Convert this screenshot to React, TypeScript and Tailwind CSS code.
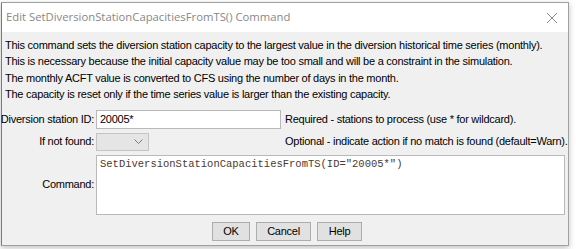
import React from "react";

const sans = { fontFamily: "'Liberation Sans', Arial, sans-serif" };

const notes = [
  "This command sets the diversion station capacity to the largest value in the diversion historical time series (monthly).",
  "This is necessary because the initial capacity value may be too small and will be a constraint in the simulation.",
  "The monthly ACFT value is converted to CFS using the number of days in the month.",
  "The capacity is reset only if the time series value is larger than the existing capacity.",
];

const App = () => {
  return (
    <div className="w-[576px] h-[249px] bg-white pl-[1px] pt-[2px]">
      <div className="w-[568px] h-[244px] flex flex-col border border-[#a0a0a0] border-l-[#7a7a7a] bg-[#f0f0f0] shadow-[0_2px_6px_rgba(0,0,0,0.25)]">
        <div
          className="h-[29px] shrink-0 bg-white flex items-center justify-between pl-[4px] pr-[10px] text-[11.3px] text-[#888888]"
          style={{ fontFamily: "'Segoe UI', 'Open Sans', 'Liberation Sans', sans-serif" }}
        >
          <span>Edit SetDiversionStationCapacitiesFromTS() Command</span>
          <svg width="12" height="12" viewBox="0 0 12 12" className="text-[#8a8a8a]">
            <path d="M1 1L11 11M11 1L1 11" stroke="currentColor" strokeWidth="1" />
          </svg>
        </div>

        <div className="flex-1 flex flex-col text-[11px] tracking-[-0.25px] text-black" style={sans}>
          <div className="pl-[3px] pt-[5px] leading-[16.4px]">
            {notes.map((n) => (
              <div key={n} className="whitespace-nowrap">{n}</div>
            ))}
          </div>

          <div className="mt-[7px] flex items-center h-[19px]">
            <div className="w-[94px] shrink-0 flex justify-end pr-[2px] whitespace-nowrap">Diversion station ID:</div>
            <div className="w-[185px] shrink-0 h-[19px] bg-white border border-[#b9b9b9] flex items-center pl-[3px]">20005*</div>
            <div className="pl-[4px] whitespace-nowrap">Required - stations to process (use * for wildcard).</div>
          </div>

          <div className="mt-[4px] flex items-center h-[18px]">
            <div className="w-[94px] shrink-0 flex justify-end pr-[2px] whitespace-nowrap">If not found:</div>
            <div className="w-[53px] shrink-0 h-[18px] bg-[#e5e5e5] border border-[#c4c4c4] flex items-center justify-end pr-[5px]">
              <svg width="9" height="6" viewBox="0 0 9 6">
                <path d="M0.5 0.5L4.5 4.5L8.5 0.5" stroke="#7a7a7a" fill="none" strokeWidth="1" />
              </svg>
            </div>
            <div className="w-[132px] shrink-0" />
            <div className="pl-[4px] whitespace-nowrap">Optional - indicate action if no match is found (default=Warn).</div>
          </div>

          <div className="mt-[4px] flex">
            <div className="w-[94px] shrink-0 flex justify-end pr-[2px] self-center">Command:</div>
            <div
              className="w-[469px] shrink-0 h-[60px] bg-white border border-[#b9b9b9] pl-[3px] pt-[1px] text-[10.5px] tracking-normal text-[#4a3a30]"
              style={{ fontFamily: "'Liberation Mono', 'Courier New', monospace" }}
            >
              SetDiversionStationCapacitiesFromTS(ID="20005*")
            </div>
          </div>

          <div className="mt-[7px] flex justify-center gap-[6px] pl-[4px]">
            <button className="w-[38px] h-[19px] bg-[#e1e1e1] border border-[#adadad]">OK</button>
            <button className="w-[55px] h-[19px] bg-[#e1e1e1] border border-[#adadad]">Cancel</button>
            <button className="w-[45px] h-[19px] bg-[#e1e1e1] border border-[#adadad]">Help</button>
          </div>
        </div>
      </div>
    </div>
  );
};

export default App;
